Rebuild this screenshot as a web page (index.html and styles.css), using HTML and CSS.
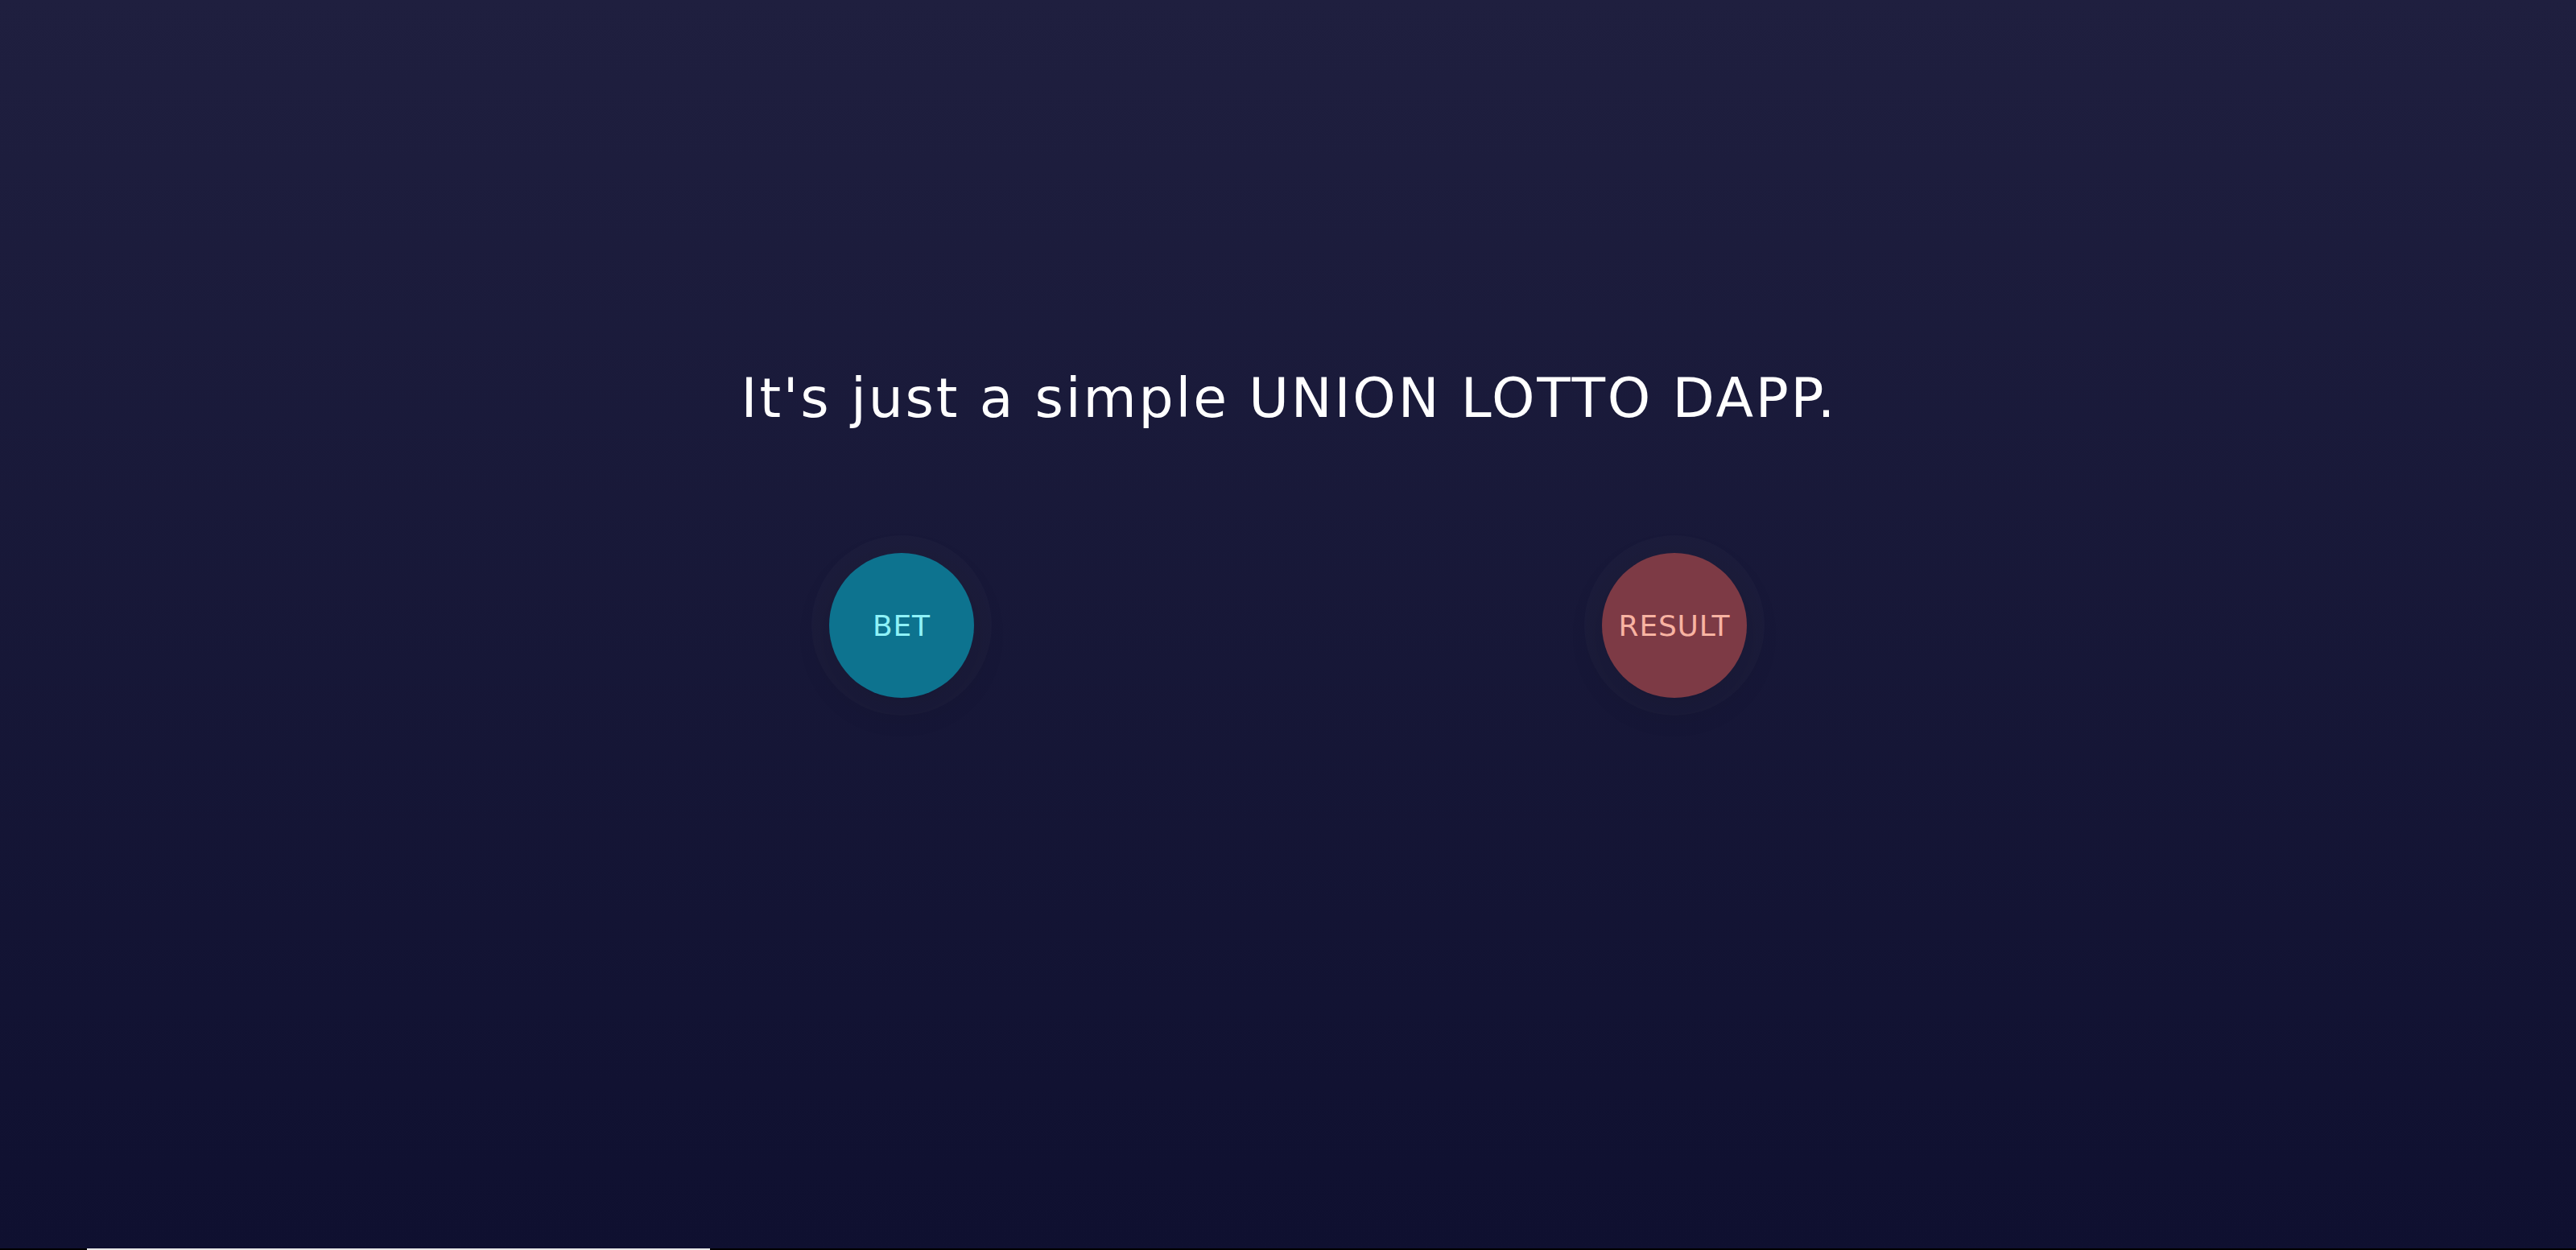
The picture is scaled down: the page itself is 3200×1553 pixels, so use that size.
FILE: index.html
```html
<!DOCTYPE html>
<html lang="en">
<head>
<meta charset="utf-8">
<title>Union Lotto DApp</title>
<link rel="stylesheet" href="styles.css">
</head>
<body>
<main class="hero">
  <h1 class="title">It's just a simple UNION LOTTO DAPP.</h1>
  <div class="actions">
    <div class="slot"><button class="circle bet">BET</button></div>
    <div class="slot"><button class="circle result">RESULT</button></div>
  </div>
</main>
<div class="bottom-strip"><div class="bar"></div></div>
</body>
</html>
```

FILE: styles.css
```css
html, body {
  margin: 0;
  padding: 0;
}
body {
  background: #0f1030;
  font-family: "DejaVu Sans", "Open Sans", sans-serif;
  overflow: hidden;
}
.hero {
  height: 1551px;
  background: linear-gradient(to bottom, #1f1f3f 0%, #0f1030 100%);
  display: flex;
  flex-direction: column;
  align-items: center;
  box-sizing: border-box;
  padding-top: 455px;
}
.title {
  margin: 0;
  font-weight: 400;
  font-size: 68px;
  line-height: 80px;
  color: #ffffff;
  letter-spacing: 2.8px;
  padding-left: 2.8px;
}
.actions {
  width: 1920px;
  display: grid;
  grid-template-columns: 1fr 1fr;
  margin-top: 152px;
}
.slot {
  display: flex;
  justify-content: center;
}
.circle {
  width: 180px;
  height: 180px;
  border-radius: 50%;
  border: none;
  padding: 0;
  font-family: "DejaVu Sans", "Open Sans", sans-serif;
  font-size: 36px;
  letter-spacing: 0.8px;
  cursor: pointer;
  box-shadow: 0 0 0 22px rgba(255, 255, 255, 0.018), 0 12px 40px rgba(0, 0, 0, 0.15);
}
.bet {
  background: #0d738f;
  color: #8ef2f8;
}
.result {
  background: #7d3a45;
  color: #f8b3a2;
}
.bottom-strip {
  height: 2px;
  background: #000000;
}
.bar {
  margin-left: 108px;
  width: 774px;
  height: 2px;
  background: #e8e8e8;
}
```
